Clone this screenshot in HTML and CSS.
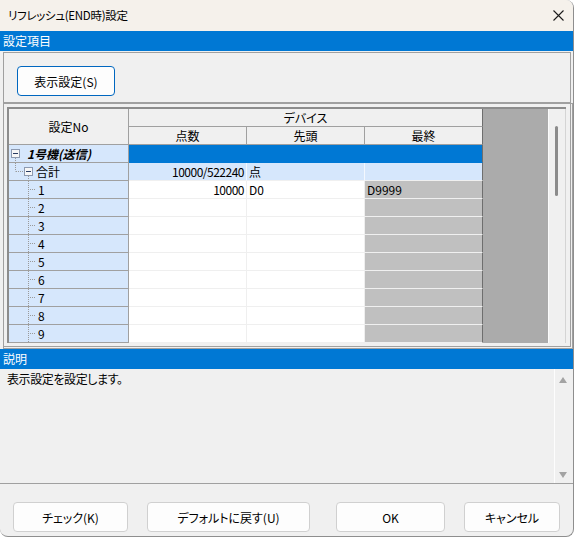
FILE: index.html
```html
<!DOCTYPE html>
<html lang="ja">
<head>
<meta charset="utf-8">
<title>リフレッシュ(END時)設定</title>
<link rel="stylesheet" href="styles.css">
</head>
<body>
<div class="window">
  <div class="titlebar">
    <span class="title">リフレッシュ(END時)設定</span>
    <svg class="close" width="11" height="11" viewBox="0 0 11 11"><path d="M0.5 0.5 L10.5 10.5 M10.5 0.5 L0.5 10.5" stroke="#1b1b1b" stroke-width="1.1" fill="none"/></svg>
  </div>
  <div class="bar">設定項目</div>
  <div class="panel">
    <button class="btn btn-focus">表示設定(S)</button>
  </div>
  <div class="frame">
    <div class="gridbox">
      <div class="grid">
        <div class="h h-no">設定No</div>
        <div class="h h-dev">デバイス</div>
        <div class="h">点数</div>
        <div class="h">先頭</div>
        <div class="h h-last">最終</div>

        <div class="tree"><svg width="18" height="17" viewBox="0 0 18 17"><line x1="6.5" y1="13" x2="6.5" y2="17" stroke="#9a9a9a" stroke-dasharray="1 1"/><rect x="2.5" y="4.5" width="8" height="8" fill="#f7f7f7" stroke="#8d9ab0"/><line x1="4" y1="8.5" x2="9" y2="8.5" stroke="#2a3d63"/></svg><span class="grp">1号機(送信)</span></div>
        <div class="sel"></div>

        <div class="tree"><svg width="27" height="17" viewBox="0 0 27 17"><path d="M6.5 0 V8.5 M7 8.5 H15" stroke="#9a9a9a" stroke-dasharray="1 1" fill="none"/><line x1="19.5" y1="13" x2="19.5" y2="17" stroke="#9a9a9a" stroke-dasharray="1 1"/><rect x="15.5" y="4.5" width="8" height="8" fill="#f7f7f7" stroke="#8d9ab0"/><line x1="17" y1="8.5" x2="22" y2="8.5" stroke="#2a3d63"/></svg>合計</div>
        <div class="sub num">10000/522240</div>
        <div class="sub">点</div>
        <div class="sub sub-last"></div>

        <div class="tree"><svg width="29" height="17" viewBox="0 0 29 17"><path d="M19.5 0 V17 M21 8.5 H27" stroke="#9a9a9a" stroke-dasharray="1 1" fill="none"/></svg>1</div>
        <div class="c num">10000</div><div class="c">D0</div><div class="g">D9999</div>

        <div class="tree"><svg width="29" height="17" viewBox="0 0 29 17"><path d="M19.5 0 V17 M21 8.5 H27" stroke="#9a9a9a" stroke-dasharray="1 1" fill="none"/></svg>2</div>
        <div class="c"></div><div class="c"></div><div class="g"></div>

        <div class="tree"><svg width="29" height="17" viewBox="0 0 29 17"><path d="M19.5 0 V17 M21 8.5 H27" stroke="#9a9a9a" stroke-dasharray="1 1" fill="none"/></svg>3</div>
        <div class="c"></div><div class="c"></div><div class="g"></div>

        <div class="tree"><svg width="29" height="17" viewBox="0 0 29 17"><path d="M19.5 0 V17 M21 8.5 H27" stroke="#9a9a9a" stroke-dasharray="1 1" fill="none"/></svg>4</div>
        <div class="c"></div><div class="c"></div><div class="g"></div>

        <div class="tree"><svg width="29" height="17" viewBox="0 0 29 17"><path d="M19.5 0 V17 M21 8.5 H27" stroke="#9a9a9a" stroke-dasharray="1 1" fill="none"/></svg>5</div>
        <div class="c"></div><div class="c"></div><div class="g"></div>

        <div class="tree"><svg width="29" height="17" viewBox="0 0 29 17"><path d="M19.5 0 V17 M21 8.5 H27" stroke="#9a9a9a" stroke-dasharray="1 1" fill="none"/></svg>6</div>
        <div class="c"></div><div class="c"></div><div class="g"></div>

        <div class="tree"><svg width="29" height="17" viewBox="0 0 29 17"><path d="M19.5 0 V17 M21 8.5 H27" stroke="#9a9a9a" stroke-dasharray="1 1" fill="none"/></svg>7</div>
        <div class="c"></div><div class="c"></div><div class="g"></div>

        <div class="tree"><svg width="29" height="17" viewBox="0 0 29 17"><path d="M19.5 0 V17 M21 8.5 H27" stroke="#9a9a9a" stroke-dasharray="1 1" fill="none"/></svg>8</div>
        <div class="c"></div><div class="c"></div><div class="g"></div>

        <div class="tree"><svg width="29" height="17" viewBox="0 0 29 17"><path d="M19.5 0 V17 M21 8.5 H27" stroke="#9a9a9a" stroke-dasharray="1 1" fill="none"/></svg>9</div>
        <div class="c"></div><div class="c"></div><div class="g"></div>
      </div>
      <div class="filler"></div>
      <div class="vscroll"><div class="thumb"></div></div>
    </div>
  </div>
  <div class="bar">説明</div>
  <div class="desc">
    <div class="desc-text">表示設定を設定します。</div>
    <div class="dscroll">
      <svg width="8" height="6" viewBox="0 0 8 6"><path d="M4 0 L8 6 L0 6 Z" fill="#a3a3a3"/></svg>
      <svg width="8" height="6" viewBox="0 0 8 6"><path d="M0 0 L8 0 L4 6 Z" fill="#a3a3a3"/></svg>
    </div>
  </div>
  <div class="footer">
    <button class="btn b-check">チェック(K)</button>
    <button class="btn b-default">デフォルトに戻す(U)</button>
    <button class="btn b-ok">OK</button>
    <button class="btn b-cancel">キャンセル</button>
  </div>
</div>
</body>
</html>
```

FILE: styles.css
```css
* { box-sizing: border-box; }
html, body { margin: 0; padding: 0; background: #ffffff; }
body {
  font-family: "Noto Sans CJK JP", "Noto Sans", sans-serif;
  font-size: 12px;
  color: #000;
  font-feature-settings: "palt";
}
.window {
  width: 574px;
  height: 537px;
  background: #f0f0f0;
  border-right: 1px solid #8e8e8e;
  border-bottom: 1px solid #8e8e8e;
  border-radius: 0 8px 8px 8px;
  overflow: hidden;
  display: flex;
  flex-direction: column;
}
.titlebar {
  height: 31px;
  flex: none;
  background: #f5f1eb;
  display: flex;
  align-items: center;
  justify-content: space-between;
  padding: 0 9px 0 8px;
}
.title { font-size: 11.5px; letter-spacing: -0.3px; line-height: 31px; }
.close { display: block; }
.bar {
  height: 20px;
  flex: none;
  background: #0078d4;
  color: #fff;
  padding-left: 3px;
  line-height: 19px;
  font-size: 12px;
}
.panel {
  flex: none;
  margin: 1px 0 0 3px;
  width: 568px;
  height: 51px;
  border: 1px solid #a0a0a0;
  padding: 13px 0 0 13px;
}
.btn {
  font-family: "Noto Sans CJK JP", "Noto Sans", sans-serif;
  font-feature-settings: "palt";
  font-size: 12px;
  color: #000;
  background: #fdfdfd;
  border: 1px solid #d0d0d0;
  border-radius: 4px;
  height: 30px;
  padding: 0;
  display: flex;
  align-items: center;
  justify-content: center;
}
.btn-focus {
  width: 98px;
  border-color: #0067c0;
}
.frame {
  flex: none;
  margin-left: 3px;
  width: 570px;
  height: 246px;
  border-top: 1px solid #a0a0a0;
  border-left: 1px solid #a0a0a0;
  border-right: 3px double #a0a0a0;
  border-bottom: 3px double #a0a0a0;
  padding: 3px 4px 3px 3px;
}
.gridbox {
  display: flex;
  width: 559px;
  height: 236px;
  border-top: 2px solid #8c8c8c;
  border-left: 2px solid #8c8c8c;
  overflow: hidden;
}
.grid {
  flex: none;
  display: grid;
  grid-template-columns: 120px 118px 118px 118px;
  grid-auto-rows: 18px;
  width: 474px;
}
.grid > div {
  line-height: 17px;
  white-space: nowrap;
  overflow: hidden;
}
.h {
  background: #f0f0f0;
  border-right: 1px solid #a0a0a0;
  border-bottom: 1px solid #a0a0a0;
  text-align: center;
}
.h-no { grid-row: span 2; line-height: 35px !important; }
.h-dev { grid-column: span 3; border-right-color: #6e6e6e; }
.h-last { border-right-color: #6e6e6e; }
.tree {
  background: #d6e7fc;
  border-right: 1px solid #a0a0a0;
  border-bottom: 1px solid #a0a0a0;
  display: flex;
  align-items: center;
}
.tree svg { flex: none; display: block; }
.grp { font-weight: bold; font-style: italic; }
.sel {
  grid-column: span 3;
  background: #0078d4;
  border-right: 1px solid #6e6e6e;
  border-bottom: 1px solid #0078d4;
}
.sub {
  background: #d6e7fc;
  border-right: 1px solid #f4f8fe;
  border-bottom: 1px solid #f0f0f0;
  padding-left: 2px;
}
.sub-last { border-right-color: #6e6e6e; }
.c {
  background: #ffffff;
  border-right: 1px solid #efefef;
  border-bottom: 1px solid #efefef;
  padding-left: 2px;
}
.num { text-align: right; letter-spacing: -0.5px; padding: 0 2px 0 0 !important; }
.g {
  background: #c0c0c0;
  border-right: 1px solid #6e6e6e;
  border-bottom: 1px solid #f0f0f0;
  padding-left: 2px;
}
.filler {
  flex: none;
  width: 65px;
  background: #ababab;
}
.vscroll {
  flex: none;
  width: 18px;
  background: #f0f0f0;
  border-left: 1px solid #fbfbfb;
  border-right: 1px solid #d4d4d4;
  padding: 17px 0 0 6px;
}
.thumb {
  width: 3px;
  height: 70px;
  background: #8b8b8b;
  border-radius: 2px;
}
.desc {
  flex: none;
  height: 115px;
  display: flex;
  border-bottom: 1px solid #a0a0a0;
}
.desc-text {
  flex: 1;
  padding: 2px 0 0 7px;
  line-height: 16px;
  letter-spacing: -0.4px;
}
.dscroll {
  flex: none;
  width: 17px;
  margin-right: 2px;
  border-left: 1px solid #fdfdfd;
  display: flex;
  flex-direction: column;
  justify-content: space-between;
  padding: 8px 0 5px 4px;
}
.dscroll svg { display: block; }
.footer {
  flex: none;
  display: flex;
  padding-top: 18px;
}
.b-check { width: 115px; margin-left: 13px; }
.b-default { width: 163px; margin-left: 19px; }
.b-ok { width: 109px; margin-left: 26px; }
.b-cancel { width: 96px; margin-left: 19px; }
```
